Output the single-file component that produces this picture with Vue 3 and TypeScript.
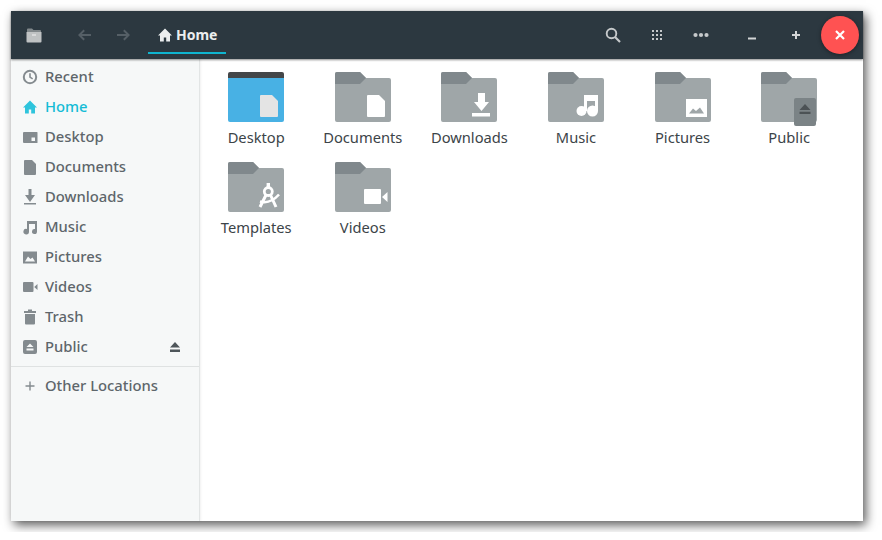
<template>
  <div class="window">
    <header class="topbar">
      <svg class="ico app-ico" viewBox="0 0 16 16">
        <path d="M1 2.500q0-1 1-1h4l1.500 1.500h6.500q1 0 1 1v1H1z" fill="#81888b" />
        <path d="M.5 5h15v9.500q0 1-1 1h-13q-1 0-1-1z" fill="#bfc2c3" />
        <path d="M6 7.500h4v1H6z" fill="#f2f2f2" />
      </svg>
      <svg class="ico nav back" viewBox="0 0 16 16"><path :d="arrowBack" /></svg>
      <svg class="ico nav forward" viewBox="0 0 16 16"><path :d="arrowForward" /></svg>
      <div class="tab">
        <svg class="ico tab-ico" viewBox="0 0 16 16"><path :d="paths.home" /></svg>
        <span>Home</span>
      </div>
      <div class="tools">
        <svg class="ico" viewBox="0 0 16 16">
          <circle cx="6.500" cy="6.500" r="4.800" fill="none" stroke="#c6c9cb" stroke-width="1.900" />
          <path d="M10 10l5 5" stroke="#c6c9cb" stroke-width="2.100" />
        </svg>
        <svg class="ico" viewBox="0 0 16 16">
          <g fill="#c6c9cb">
            <template v-for="y in [3, 7, 11]" :key="y">
              <rect v-for="x in [3, 7, 11]" :key="x" :x="x" :y="y" width="2" height="2" />
            </template>
          </g>
        </svg>
        <svg class="ico" viewBox="0 0 16 16">
          <g fill="#c6c9cb"><circle cx="2.500" cy="8" r="2.100" /><circle cx="8" cy="8" r="2.100" /><circle cx="13.500" cy="8" r="2.100" /></g>
        </svg>
        <svg class="ico win-btn" viewBox="0 0 16 16"><path d="M4 10.500h8v2H4z" fill="#d3d5d6" /></svg>
        <svg class="ico" viewBox="0 0 16 16"><path d="M7 4h2v3h3v2H9v3H7V9H4V7h3z" fill="#d3d5d6" /></svg>
        <button class="close" type="button">
          <svg class="ico" viewBox="0 0 16 16"><path d="M4 4l8 8M12 4l-8 8" stroke="#fff" stroke-width="2.200" /></svg>
        </button>
      </div>
    </header>

    <div class="body">
      <aside class="sidebar">
        <div v-for="place in places" :key="place.name" class="row" :class="{ active: place.name === 'Home' }">
          <svg class="ico row-ico" viewBox="0 0 16 16"><path :d="place.icon" fill-rule="evenodd" /></svg>
          <span>{{ place.name }}</span>
          <svg v-if="place.name === 'Public'" class="ico eject" viewBox="0 0 16 16"><path :d="ejectPath" /></svg>
        </div>
        <div class="sep"></div>
        <div class="row">
          <svg class="ico row-ico" viewBox="0 0 16 16"><path d="M7.300 3.500h1.400v3.800h3.800v1.400H8.700v3.800H7.300V8.700H3.500V7.300h3.800z" /></svg>
          <span>Other Locations</span>
        </div>
      </aside>

      <main class="files">
        <div v-for="item in folders" :key="item.name" class="tile">
          <svg class="folder" width="56" height="50" viewBox="0 0 56 50">
            <template v-if="item.name === 'Desktop'">
              <path d="M2 0h52q2 0 2 2v4H0V2q0-2 2-2z" fill="#444648" />
              <path d="M0 6h56v42q0 2-2 2H2q-2 0-2-2z" fill="#48b1e4" />
              <path :d="docShape" fill="#e4e4e4" />
            </template>
            <template v-else>
              <path d="M2 0h23l6 6h23q2 0 2 2v40q0 2-2 2H2q-2 0-2-2V2q0-2 2-2z" fill="#9fa6a8" />
              <path d="M2 0h23l6 6-6 6H0V2q0-2 2-2z" fill="#80888c" />
              <path v-if="item.name === 'Documents'" :d="docShape" fill="#fff" />
              <path v-if="item.name === 'Downloads'" d="M37 21h7v9h4l-7.500 9-7.500-9h4zM31 41h18v3.500H31z" fill="#fff" />
              <g v-if="item.name === 'Music'" fill="#fff">
                <path d="M36 23h14v16h-3V29h-8v10h-3z" />
                <circle cx="33.500" cy="39" r="5" />
                <circle cx="44.500" cy="39" r="5.500" />
              </g>
              <template v-if="item.name === 'Pictures'">
                <rect x="31" y="27" width="21" height="18" fill="#fff" />
                <path d="M34 41.500l4-5 3 2.500 4-3.500 4 6z" fill="#9fa6a8" />
              </template>
              <template v-if="item.name === 'Public'">
                <rect x="33" y="26" width="22" height="28" rx="2" fill="#7b8386" />
                <path d="M44 32l5.500 6h-11zM38.500 39.800h11V42h-11z" fill="#4c5255" />
              </template>
              <g v-if="item.name === 'Templates'" fill="none" stroke="#fff" stroke-width="3">
                <path d="M40.300 21v4" stroke-width="3.400" />
                <circle cx="40.300" cy="29.500" r="4" stroke-width="2.800" />
                <path d="M38 33l-6 12M42.500 33l5.500 12" />
                <path d="M32 39.500q10 3 19-7" stroke-width="2.600" />
              </g>
              <path v-if="item.name === 'Videos'" d="M29 28q0-1 1-1h15q1 0 1 1v13q0 1-1 1H30q-1 0-1-1zM47 35l5.500-5v10z" fill="#fff" />
            </template>
          </svg>
          <span class="label">{{ item.name }}</span>
        </div>
      </main>
    </div>
  </div>
</template>

<script setup lang="ts">
const arrowBack = 'M6.500 2.500l1.400 1.400L4.800 7H14v2H4.800l3.100 3.100-1.400 1.400L1 8z';
const arrowForward = 'M9.500 2.500L8.100 3.900 11.200 7H2v2h9.200l-3.100 3.100 1.400 1.400L15 8z';
const ejectPath = 'M8 3l5 5.500H3zM3 10.500h10V13H3z';
const docShape = 'M33 23h11l6 6v15q0 1-1 1H33q-1 0-1-1V24q0-1 1-1z';

const paths: Record<string, string> = {
  recent:
    'M8 .800a7.200 7.200 0 1 0 0 14.400A7.200 7.200 0 0 0 8 .800zm0 2a5.200 5.200 0 1 1 0 10.400A5.200 5.200 0 0 1 8 2.800zM7.200 4.200v4.300l3 2.100.9-1.300-2.300-1.600V4.200z',
  home: 'M8 1.500L1 8.500h2v6h3.800v-4h2.400v4H13v-6h2z',
  desktop: 'M2 3h13q.5 0 .5.500v10q0 .5-.5.500H2q-1 0-1-1V4q0-1 1-1zM9.500 8.500V12H13V8.500z',
  documents: 'M3 1h7l4 4v10q0 1-1 1H3q-1 0-1-1V2q0-1 1-1z',
  downloads: 'M6.500 0h3v6H13l-5 7-5-7h3.500zM2 14h12v1.500H2z',
  music:
    'M5 2h10v10.500a2.500 2.500 0 1 1-2-2.400V5H7v7.500a2.800 2.800 0 1 1-2-2.600z',
  pictures: 'M1 2.500h14v12H1zM3 12.500h10l-2.500-4-2 1.500L6 7.500z',
  videos: 'M2 3h8.500q1 0 1 1v8q0 1-1 1H2q-1 0-1-1V4q0-1 1-1zM12.200 8l3.300-3v6z',
  trash: 'M6 .500h4V2h4v2H2V2h4zM3 5h10v9.500q0 1-1 1H4q-1 0-1-1z',
  public:
    'M3 1h10q2 0 2 2v10q0 2-2 2H3q-2 0-2-2V3q0-2 2-2zM8 4.500L4.500 8h7zM4.500 9.500V11.500h7V9.500z',
};

const places = [
  { name: 'Recent', icon: paths.recent },
  { name: 'Home', icon: paths.home },
  { name: 'Desktop', icon: paths.desktop },
  { name: 'Documents', icon: paths.documents },
  { name: 'Downloads', icon: paths.downloads },
  { name: 'Music', icon: paths.music },
  { name: 'Pictures', icon: paths.pictures },
  { name: 'Videos', icon: paths.videos },
  { name: 'Trash', icon: paths.trash },
  { name: 'Public', icon: paths.public },
];

const folders = [
  { name: 'Desktop' },
  { name: 'Documents' },
  { name: 'Downloads' },
  { name: 'Music' },
  { name: 'Pictures' },
  { name: 'Public' },
  { name: 'Templates' },
  { name: 'Videos' },
];
</script>

<style>
html,
body {
  background: #fff;
  overflow: hidden;
}
</style>

<style scoped>
.window {
  width: 852px;
  height: 510px;
  margin: 11px;
  display: flex;
  flex-direction: column;
  background: #fff;
  box-shadow: 3px 4px 10px rgba(0, 0, 0, 0.65);
  font-family: "Noto Sans", "Open Sans", sans-serif;
}
.ico {
  width: 16px;
  height: 16px;
  flex: none;
  display: block;
}
.topbar {
  height: 48px;
  flex: none;
  display: flex;
  align-items: center;
  padding-left: 15px;
  padding-right: 4px;
  background: #2c3840;
  position: relative;
  z-index: 1;
  box-shadow: 0 1px 2px rgba(0, 0, 0, 0.45);
}
.nav {
  fill: #555f66;
}
.back {
  margin-left: 35px;
}
.forward {
  margin-left: 22px;
}
.tab {
  align-self: flex-start;
  width: 78px;
  height: 43px;
  box-sizing: border-box;
  margin-left: 17px;
  padding: 7px 0 0 9px;
  display: flex;
  align-items: center;
  gap: 3px;
  border-bottom: 2px solid #0fb5d0;
  color: #eceeef;
  font-size: 14px;
  font-weight: 700;
}
.tab span {
  margin-bottom: 2px;
}
.tab-ico {
  fill: #eceeef;
}
.tools {
  margin-left: auto;
  display: flex;
  align-items: center;
  gap: 28px;
}
.win-btn {
  margin-left: 7px;
}
.close {
  width: 38px;
  height: 38px;
  margin-left: -11px;
  padding: 0;
  border: none;
  border-radius: 50%;
  background: #ff5252;
  display: flex;
  align-items: center;
  justify-content: center;
  box-shadow: 0 1px 4px rgba(0, 0, 0, 0.4);
}
.body {
  flex: 1;
  display: flex;
  min-height: 0;
}
.sidebar {
  width: 189px;
  flex: none;
  box-sizing: border-box;
  padding-top: 3px;
  background: #f6f8f8;
  border-right: 1px solid #e2e5e5;
  box-shadow: 1px 0 2px rgba(0, 0, 0, 0.06);
}
.row {
  height: 30px;
  display: flex;
  align-items: center;
  padding: 0 16px 0 11px;
  gap: 7px;
  color: #5e666b;
  font-size: 14.800px;
  font-weight: 500;
}
.row span {
  margin-bottom: 2px;
}
.row-ico {
  fill: #848b8f;
}
.row.active {
  color: #14bcd6;
}
.row.active .row-ico {
  fill: #2ec4dc;
}
.eject {
  margin-left: auto;
  fill: #4e565a;
}
.sep {
  height: 1px;
  margin: 4px 0;
  background: #dfe2e2;
}
.files {
  flex: 1;
  display: grid;
  grid-template-columns: repeat(6, 106.600px);
  grid-auto-rows: 90px;
  align-content: start;
  padding: 13px 0 0 2.900px;
}
.tile {
  display: flex;
  flex-direction: column;
  align-items: center;
}
.folder {
  overflow: visible;
  flex: none;
}
.label {
  margin-top: 5px;
  line-height: 20px;
  font-size: 14.700px;
  color: #3c4448;
  white-space: nowrap;
}
</style>
